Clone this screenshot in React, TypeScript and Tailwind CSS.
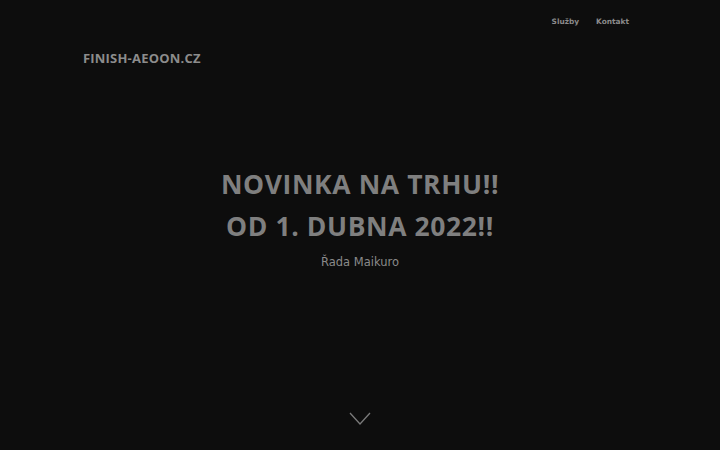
export default function App() {
  return (
    <div className="w-[720px] h-[450px] bg-[#0d0d0d] relative overflow-hidden flex flex-col" style={{ fontFamily: '"DejaVu Sans", sans-serif' }}>
      <nav className="flex justify-end gap-[17px] pr-[91px] pt-[17px] text-[7.4px] leading-[9px] font-bold text-[#8a8a8a]">
        <span>Služby</span>
        <span>Kontakt</span>
      </nav>
      <div className="pl-[83px] pt-[23px] text-[13px] leading-[18px] font-bold text-[#8c8c8c] tracking-[0.2px]" style={{ fontFamily: '"Open Sans", sans-serif' }}>
        FINISH-AEOON.CZ
      </div>
      <div className="flex flex-col items-center pt-[96px] text-[#7f7f7f]">
        <div className="text-[26.5px] font-bold leading-[42px] tracking-[0.6px]" style={{ fontFamily: '"Open Sans", sans-serif' }}>NOVINKA NA TRHU!!</div>
        <div className="text-[26.5px] font-bold leading-[43px] tracking-[0.6px]" style={{ fontFamily: '"Open Sans", sans-serif' }}>OD 1. DUBNA 2022!!</div>
        <div className="mt-[6px] text-[11.5px] text-[#8a8a8a]">Řada Maikuro</div>
      </div>
      <svg className="absolute left-[349px] top-[412px]" width="22" height="14" viewBox="0 0 22 14">
        <path d="M1 1 L11 12 L21 1" stroke="#7a7a7a" strokeWidth="1.3" fill="none" />
      </svg>
    </div>
  );
}
